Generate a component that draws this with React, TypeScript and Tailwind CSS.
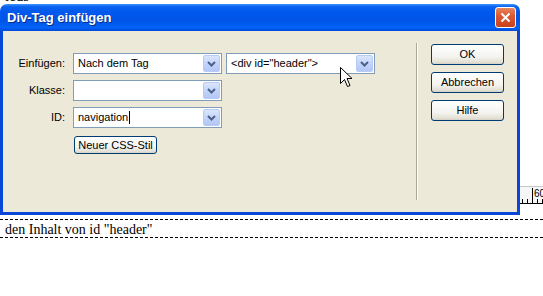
import React from "react";

function Chevron() {
  return (
    <svg width="9" height="6" viewBox="0 0 9 6">
      <path d="M1 1 L4.5 4.5 L8 1" fill="none" stroke="#4d6185" strokeWidth="2" />
    </svg>
  );
}

function Combo({ value, caret }: { value?: string; caret?: boolean }) {
  return (
    <div className="flex items-center h-[21px] w-[149px] border border-[#7f9db9] bg-white pl-[4px] pr-[1px]">
      <span className="flex-1 flex items-center text-[11px] text-black leading-none whitespace-nowrap">
        {value}
        {caret && <span className="inline-block w-px h-[13px] bg-black ml-px" />}
      </span>
      <span className="flex items-center justify-center w-[17px] h-[17px] rounded-[2px] border border-[#b8cbf6] bg-[linear-gradient(to_bottom,#dbe6fd_0%,#c3d4fb_50%,#b3c7f7_100%)]">
        <Chevron />
      </span>
    </div>
  );
}

function XpButton({ label, className = "" }: { label: string; className?: string }) {
  return (
    <div
      className={`flex items-center justify-center border border-[#003c74] rounded-[3px] bg-[linear-gradient(to_bottom,#ffffff_0%,#f4f4f0_60%,#e3e0d5_90%,#d6d0c5_100%)] text-[11px] text-black leading-none ${className}`}
    >
      {label}
    </div>
  );
}

function Cursor() {
  return (
    <svg width="13" height="21" viewBox="0 0 13 21" className="absolute left-[340px] top-[67px]">
      <path
        d="M0.5 0.5 L0.5 16.5 L4.5 12.5 L7.5 19.5 L10 18.5 L7 11.5 L12 11.5 Z"
        fill="#ffffff"
        stroke="#000000"
        strokeWidth="1"
        strokeLinejoin="miter"
      />
    </svg>
  );
}

export default function App() {
  return (
    <div className="relative w-[543px] h-[296px] bg-white overflow-hidden font-['Liberation_Sans',Arial,sans-serif]">
      {/* background page */}
      <div className="h-[4px] overflow-hidden">
        <div className="mt-[-12px] pl-[5px] text-[15px] leading-[16px] text-black font-['Liberation_Serif','Times_New_Roman',serif]">
          ieds
        </div>
      </div>
      <div className="mt-[182px] ml-auto w-[24px] h-[18px] border-t border-[#c8c8c8] bg-[#f6f6f6]">
        <svg width="24" height="17" viewBox="0 0 24 17">
          <line x1="0" y1="16.5" x2="24" y2="16.5" stroke="#000" strokeWidth="1" />
          <line x1="3.5" y1="12" x2="3.5" y2="17" stroke="#000" />
          <line x1="8.5" y1="12" x2="8.5" y2="17" stroke="#000" />
          <line x1="13.5" y1="1" x2="13.5" y2="17" stroke="#000" />
          <line x1="18.5" y1="12" x2="18.5" y2="17" stroke="#000" />
          <line x1="23.5" y1="12" x2="23.5" y2="17" stroke="#000" />
          <text x="15" y="10" fontSize="10" fontFamily="Liberation Sans, Arial, sans-serif" fill="#000">
            60
          </text>
        </svg>
      </div>
      <div className="mt-[15px] border-y border-dashed border-black h-[19px] pl-[5px] pt-px text-[14px] leading-[17px] text-black font-['Liberation_Serif','Times_New_Roman',serif]">
        den Inhalt von id "header"
      </div>

      {/* dialog window */}
      <div className="absolute left-0 top-[4px] w-[520px] flex flex-col">
        <div className="h-[27px] rounded-t-[7px] flex items-center pl-[7px] pr-[4px] bg-[linear-gradient(to_bottom,#3d95ff_0%,#0a62f0_10%,#0058ee_30%,#0054e6_60%,#0062f8_88%,#0048d8_100%)]">
          <span className="flex-1 text-white font-bold text-[13px] leading-none [text-shadow:1px_1px_0_#0a2a8a]">
            Div-Tag einfügen
          </span>
          <span className="w-[21px] h-[21px] rounded-[3px] border border-white flex items-center justify-center bg-[linear-gradient(to_bottom,#e6865e_0%,#dc5a33_40%,#c9401c_100%)]">
            <svg width="11" height="11" viewBox="0 0 11 11">
              <path d="M1.5 1.5 L9.5 9.5 M9.5 1.5 L1.5 9.5" stroke="#ffffff" strokeWidth="2" />
            </svg>
          </span>
        </div>
        <div className="h-[184px] border-x-[3px] border-b-[3px] border-[#0846d8] bg-[#ece9d8] flex">
          {/* form */}
          <div className="w-[413px] pt-[22px] flex flex-col gap-[6px] text-[11px] text-black">
            <div className="flex items-center h-[21px]">
              <span className="w-[62px] text-right leading-none">Einfügen:</span>
              <div className="ml-[8px] flex gap-[4px]">
                <Combo value="Nach dem Tag" />
                <Combo value={'<div id="header">'} />
              </div>
            </div>
            <div className="flex items-center h-[21px]">
              <span className="w-[62px] text-right leading-none">Klasse:</span>
              <div className="ml-[8px]">
                <Combo />
              </div>
            </div>
            <div className="flex items-center h-[21px]">
              <span className="w-[62px] text-right leading-none">ID:</span>
              <div className="ml-[8px]">
                <Combo value="navigation" caret />
              </div>
            </div>
            <div className="mt-[2px] ml-[71px]">
              <XpButton label="Neuer CSS-Stil" className="w-[83px] h-[18px]" />
            </div>
          </div>
          {/* separator */}
          <div className="mt-[12px] mb-[12px] w-[2px] border-l border-[#aca899] bg-white" />
          {/* buttons */}
          <div className="pl-[13px] pt-[13px] flex flex-col gap-[7px]">
            <XpButton label="OK" className="w-[73px] h-[21px]" />
            <XpButton label="Abbrechen" className="w-[73px] h-[21px]" />
            <XpButton label="Hilfe" className="w-[73px] h-[21px]" />
          </div>
        </div>
      </div>

      <Cursor />
    </div>
  );
}
